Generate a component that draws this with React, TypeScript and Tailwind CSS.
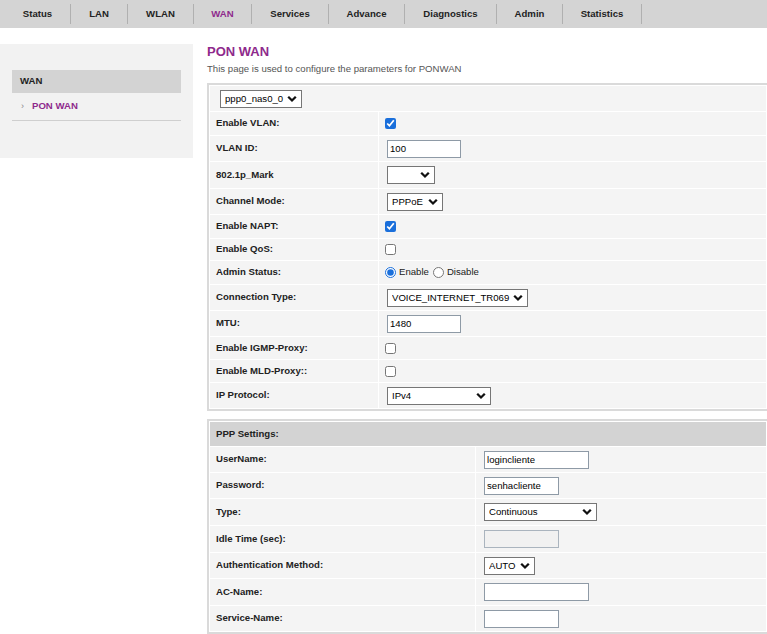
import React from "react";

const navItems = [
  { label: "Status", w: "w-[65px]" },
  { label: "LAN", w: "w-[56px]" },
  { label: "WLAN", w: "w-[65px]" },
  { label: "WAN", w: "w-[57px]", active: true },
  { label: "Services", w: "w-[76px]" },
  { label: "Advance", w: "w-[75px]" },
  { label: "Diagnostics", w: "w-[91px]" },
  { label: "Admin", w: "w-[65px]" },
  { label: "Statistics", w: "w-[78px]" },
];

const Chevron = () => (
  <svg
    width="10"
    height="7"
    viewBox="0 0 10 7"
    className="pointer-events-none absolute right-[5px] top-1/2 -translate-y-1/2"
  >
    <path d="M1.2 1.3 L5 5 L8.8 1.3" fill="none" stroke="#111" strokeWidth="2.3" />
  </svg>
);

const Select: React.FC<{ value: string; w: string }> = ({ value, w }) => (
  <div className={`relative inline-block ${w}`}>
    <select
      defaultValue={value}
      className="h-[18px] w-full appearance-none rounded-none border border-[#767676] bg-white pl-[4px] pr-[16px] text-[9.6px] leading-[16px] text-black outline-none"
    >
      <option value={value}>{value}</option>
    </select>
    <Chevron />
  </div>
);

const Input: React.FC<{ value?: string; w: string; disabled?: boolean }> = ({ value = "", w, disabled }) => (
  <input
    defaultValue={value}
    disabled={disabled}
    className={`h-[18px] ${w} border ${disabled ? "border-[#aab4be] bg-[#f1f1f1]" : "border-[#8e9aa6] bg-white"} px-[2px] text-[9.6px] text-black outline-none`}
  />
);

const Check: React.FC<{ checked?: boolean }> = ({ checked }) => (
  <input
    type="checkbox"
    defaultChecked={checked}
    className="m-0 h-[11px] w-[11px] accent-[#1a6fdb]"
  />
);

const AdminStatus = () => (
  <div className="flex items-center">
    <input type="radio" name="admin" defaultChecked className="m-0 h-[11px] w-[11px] accent-[#1a6fdb]" />
    <span className="ml-[3px]">Enable</span>
    <input type="radio" name="admin" className="m-0 ml-[4px] h-[11px] w-[11px]" />
    <span className="ml-[3px]">Disable</span>
  </div>
);

const wanRows: { label: string; h: string; field: React.ReactNode }[] = [
  { label: "Enable VLAN:", h: "h-[23px]", field: <Check checked /> },
  { label: "VLAN ID:", h: "h-[25px]", field: <div className="ml-[2px]"><Input value="100" w="w-[74px]" /></div> },
  { label: "802.1p_Mark", h: "h-[26px]", field: <div className="ml-[2px]"><Select value="" w="w-[48px]" /></div> },
  { label: "Channel Mode:", h: "h-[25px]", field: <div className="ml-[2px]"><Select value="PPPoE" w="w-[56px]" /></div> },
  { label: "Enable NAPT:", h: "h-[23px]", field: <Check checked /> },
  { label: "Enable QoS:", h: "h-[21px]", field: <Check /> },
  { label: "Admin Status:", h: "h-[23px]", field: <AdminStatus /> },
  { label: "Connection Type:", h: "h-[25px]", field: <div className="ml-[2px]"><Select value="VOICE_INTERNET_TR069" w="w-[141px]" /></div> },
  { label: "MTU:", h: "h-[25px]", field: <div className="ml-[2px]"><Input value="1480" w="w-[74px]" /></div> },
  { label: "Enable IGMP-Proxy:", h: "h-[22px]", field: <Check /> },
  { label: "Enable MLD-Proxy::", h: "h-[22px]", field: <Check /> },
  { label: "IP Protocol:", h: "h-[25px]", field: <div className="ml-[2px]"><Select value="IPv4" w="w-[104px]" /></div> },
];

const pppRows: { label: string; h: string; field: React.ReactNode }[] = [
  { label: "UserName:", h: "h-[25px]", field: <Input value="logincliente" w="w-[105px]" /> },
  { label: "Password:", h: "h-[25px]", field: <Input value="senhacliente" w="w-[75px]" /> },
  { label: "Type:", h: "h-[26px]", field: <Select value="Continuous" w="w-[113px]" /> },
  { label: "Idle Time (sec):", h: "h-[26px]", field: <Input w="w-[75px]" disabled /> },
  { label: "Authentication Method:", h: "h-[25px]", field: <Select value="AUTO" w="w-[51px]" /> },
  { label: "AC-Name:", h: "h-[26px]", field: <Input w="w-[105px]" /> },
  { label: "Service-Name:", h: "h-[25px]", field: <Input w="w-[75px]" /> },
];

export default function App() {
  return (
    <div className="min-h-screen overflow-hidden bg-white font-['Liberation_Sans',Arial,sans-serif] text-[9.6px] text-[#222]">
      {/* top menu */}
      <nav className="flex h-[28px] items-center bg-[#d4d4d4] pl-[5px]">
        {navItems.map((item) => (
          <React.Fragment key={item.label}>
            <div
              className={`${item.w} text-center font-bold ${item.active ? "text-[#8e2a8c]" : "text-[#222]"}`}
            >
              {item.label}
            </div>
            <span className="h-[20px] w-px bg-[#b0b0b0]" />
          </React.Fragment>
        ))}
      </nav>

      <div className="flex">
        {/* side menu */}
        <aside className="mt-[16px] h-[114px] w-[193px] shrink-0 bg-[#f2f2f2] px-[12px] pt-[26px]">
          <div className="flex h-[23px] items-center bg-[#d3d3d3] pl-[8px] font-bold text-[#222]">WAN</div>
          <div className="flex h-[28px] items-center border-b border-[#cfcfcf] pl-[9px]">
            <span className="text-[9px] text-[#888]">›</span>
            <span className="ml-[8px] font-bold text-[#8e2a8c]">PON WAN</span>
          </div>
        </aside>

        {/* content */}
        <main className="ml-[14px] w-[562px] shrink-0 pt-[16px]">
          <h1 className="text-[13px] font-bold leading-[16px] text-[#8e2a8c]">PON WAN</h1>
          <p className="mt-[2px] leading-[13px] text-[#555]">
            This page is used to configure the parameters for PONWAN
          </p>

          <div className="mt-[8px] flex flex-col gap-px border-2 border-[#dadada] p-px">
            <div className="flex h-[25px] items-center bg-[#f4f4f4] pl-[10px]">
              <Select value="ppp0_nas0_0" w="w-[82px]" />
            </div>
            {wanRows.map((row) => (
              <div key={row.label} className={`flex ${row.h} gap-px`}>
                <div className="flex w-[168px] items-center bg-[#f4f4f4] pl-[6px] font-bold">{row.label}</div>
                <div className="flex flex-1 items-center bg-[#f4f4f4] pl-[6px]">{row.field}</div>
              </div>
            ))}
          </div>

          <div className="mt-[8px] flex flex-col gap-px border-2 border-[#dadada] p-px">
            <div className="flex h-[24px] items-center bg-[#d3d3d3] pl-[6px] font-bold">PPP Settings:</div>
            {pppRows.map((row) => (
              <div key={row.label} className={`flex ${row.h} gap-px`}>
                <div className="flex w-[265px] items-center bg-[#f4f4f4] pl-[6px] font-bold">{row.label}</div>
                <div className="flex flex-1 items-center bg-[#f4f4f4] pl-[8px]">{row.field}</div>
              </div>
            ))}
          </div>
        </main>
      </div>
    </div>
  );
}
